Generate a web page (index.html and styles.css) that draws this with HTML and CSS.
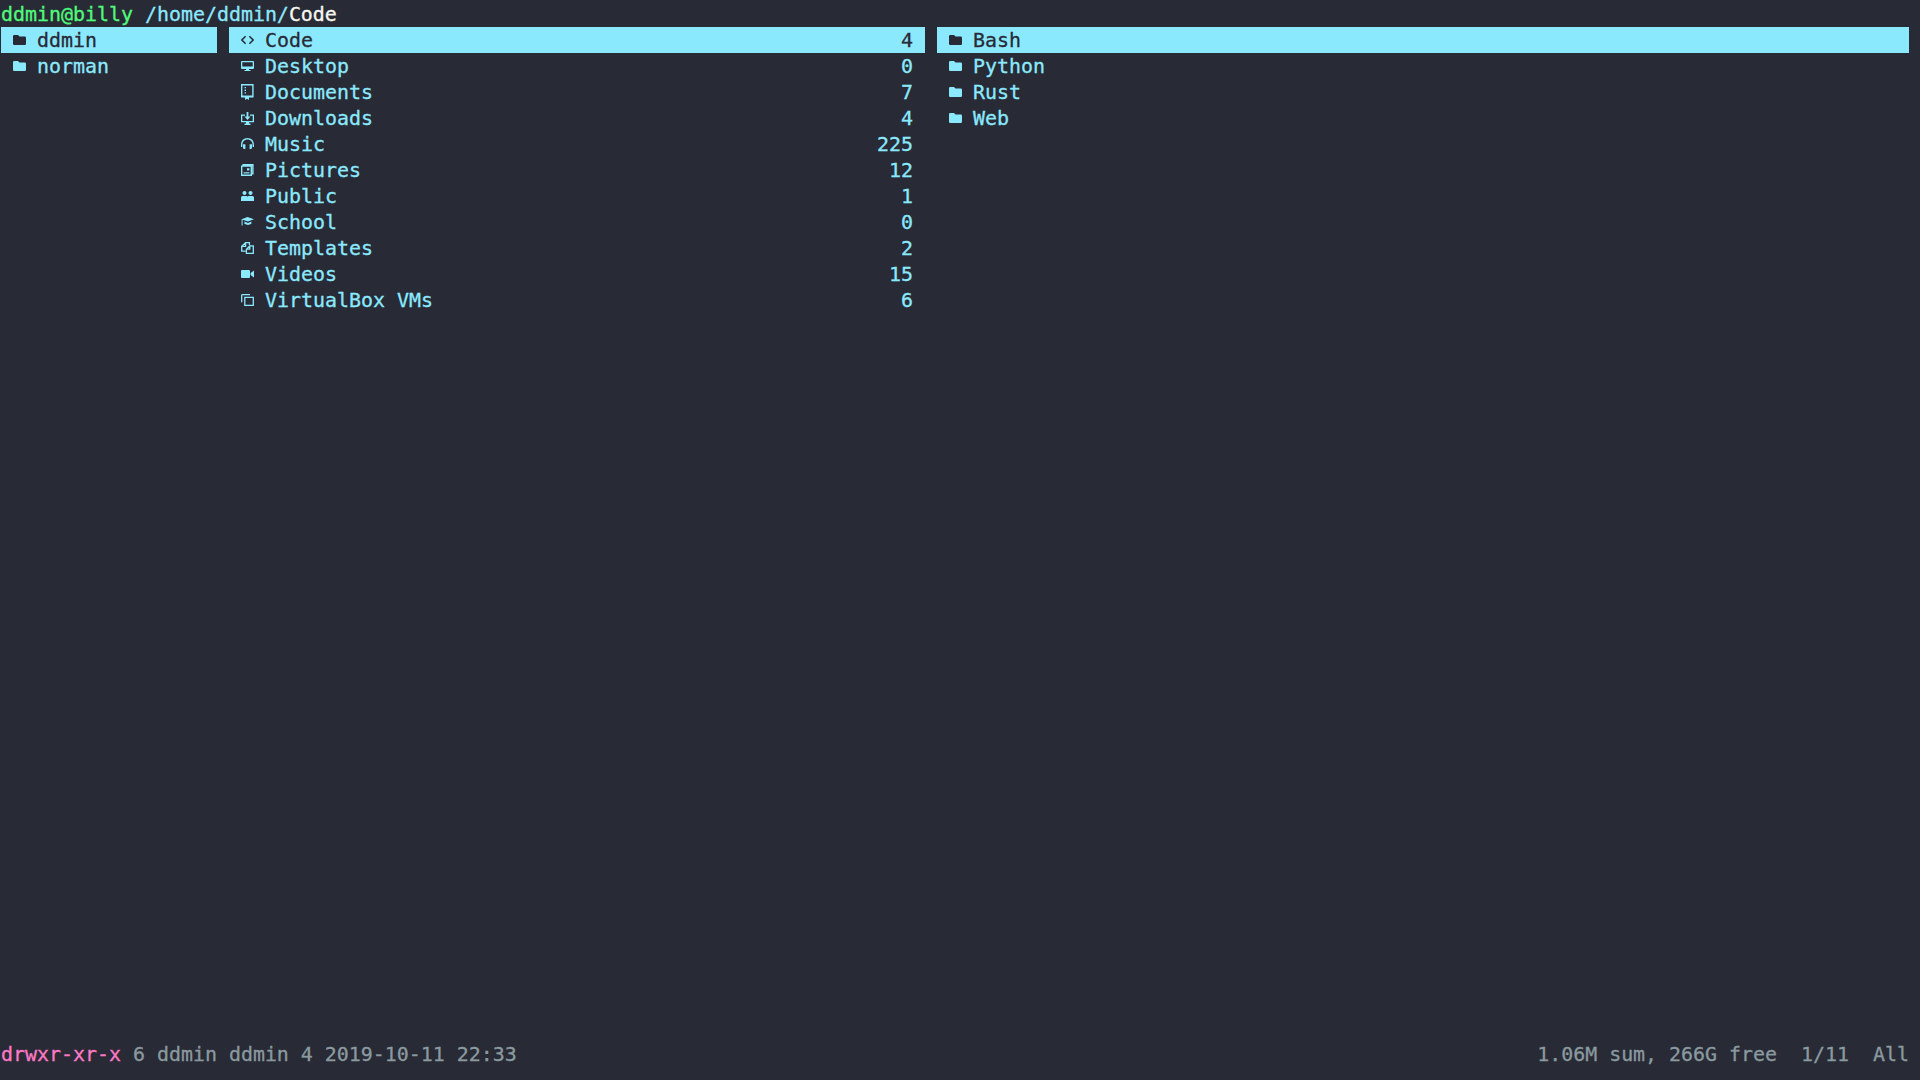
FILE: index.html
```html
<!DOCTYPE html>
<html lang="en">
<head>
<meta charset="utf-8">
<title>ranger</title>
<link rel="stylesheet" href="styles.css">
</head>
<body>
<svg class="defs" width="0" height="0" aria-hidden="true">
  <symbol id="i-folder" viewBox="0 0 13 16"><path fill="currentColor" d="M0 4.2Q0 3 1.2 3H5L6.5 4.6H11.8Q13 4.6 13 5.8V11.8Q13 13 11.8 13H1.2Q0 13 0 11.8Z"/></symbol>
  <symbol id="i-code" viewBox="0 0 13 16"><path fill="none" stroke="currentColor" stroke-width="1.5" d="M4.6 4.2L.9 8L4.6 11.8M8.4 4.2L12.1 8L8.4 11.8"/></symbol>
  <symbol id="i-desktop" viewBox="0 0 13 16"><path fill="currentColor" fill-rule="evenodd" d="M1 3H12Q13 3 13 4V10Q13 11 12 11H8V12H9.5V13H3.5V12H5V11H1Q0 11 0 10V4Q0 3 1 3ZM1.3 4.3V8.6H11.7V4.3Z"/></symbol>
  <symbol id="i-docs" viewBox="0 0 13 16"><path fill="currentColor" fill-rule="evenodd" d="M0 0H12.6V13.6H8V16L6 14.8L4 16V13.6H0ZM1.4 1.4V11.4H11.2V1.4ZM3.6 3H5V4.3H3.6ZM3.6 5.6H5V6.9H3.6ZM3.6 8.2H5V9.5H3.6Z"/></symbol>
  <symbol id="i-down" viewBox="0 0 13 16"><path fill="currentColor" d="M0 4.5H4V5.8H1.3V11H11.7V5.8H9V4.5H13V12.3H8V13.6H9.5V15H3.5V13.6H5V12.3H0ZM5.6 2H7.4V6.5H9.5L6.5 10L3.5 6.5H5.6Z"/></symbol>
  <symbol id="i-music" viewBox="0 0 13 16"><path fill="currentColor" d="M0 8.6C0 4.8 2.8 2 6.5 2S13 4.8 13 8.6V11H11.6V8.6C11.6 5.6 9.4 3.4 6.5 3.4S1.4 5.6 1.4 8.6V11H0ZM2 8.2H4.4V13H3.2Q2 13 2 11.8ZM8.6 8.2H11V11.8Q11 13 9.8 13H8.6Z"/></symbol>
  <symbol id="i-pics" viewBox="0 0 13 16"><path fill="currentColor" fill-rule="evenodd" d="M0 3.4H1.4V2H12.6V12.4H11V14H0ZM2.8 3.4H11V11H11.2V3.4ZM1.4 4.8V12.6H9.6V4.8ZM6 6.2H8.4V8.6H6ZM2.6 10.2H8.4V11.4H2.6Z"/></symbol>
  <symbol id="i-public" viewBox="0 0 13 16"><path fill="currentColor" d="M3.5 3A2 2 0 1 1 3.49 3ZM9.5 3A2 2 0 1 1 9.49 3ZM0 9.5Q0 8 1.5 8H5.5Q6.5 8 6.5 9Q6.5 8 7.5 8H11.5Q13 8 13 9.5V13H0Z"/></symbol>
  <symbol id="i-school" viewBox="0 0 13 16"><path fill="currentColor" d="M6.5 3L13 5.2L7 7.6L1.6 5.8V11.4H.6V5.2ZM3.4 7.6L7 8.9L10.4 7.6V9.8Q7 12 3.4 9.8Z"/></symbol>
  <symbol id="i-templates" viewBox="0 0 13 16"><path fill="none" stroke="currentColor" stroke-width="1.3" d="M8.4 5V2.7H4.6L.7 6.4V11.2H4.6M4.6 2.9V6.4H.9M8.8 5.8H12.3V13.4H5.4V9.2ZM8.8 6V9.2H5.6"/></symbol>
  <symbol id="i-videos" viewBox="0 0 13 16"><path fill="currentColor" d="M1 4H8Q9 4 9 5V11Q9 12 8 12H1Q0 12 0 11V5Q0 4 1 4ZM9.6 7L13 4.6V11.4L9.6 9Z"/></symbol>
  <symbol id="i-vbox" viewBox="0 0 13 16"><path fill="none" stroke="currentColor" stroke-width="1.3" d="M3.8 5.3H12.3V13.4H3.8ZM.7 10.2V3.5Q.7 2.7 1.5 2.7H9"/></symbol>
</svg>

<header class="title"><span class="host">ddmin@billy</span> <span class="path">/home/ddmin/</span><span class="leaf">Code</span></header>

<main class="columns">
  <ul class="col col-parent">
    <li class="row sel"><svg class="icon"><use href="#i-folder"/></svg><span class="name">ddmin</span></li>
    <li class="row"><svg class="icon"><use href="#i-folder"/></svg><span class="name">norman</span></li>
  </ul>
  <ul class="col col-current">
    <li class="row sel"><svg class="icon"><use href="#i-code"/></svg><span class="name">Code</span><span class="count">4</span></li>
    <li class="row"><svg class="icon"><use href="#i-desktop"/></svg><span class="name">Desktop</span><span class="count">0</span></li>
    <li class="row"><svg class="icon"><use href="#i-docs"/></svg><span class="name">Documents</span><span class="count">7</span></li>
    <li class="row"><svg class="icon"><use href="#i-down"/></svg><span class="name">Downloads</span><span class="count">4</span></li>
    <li class="row"><svg class="icon"><use href="#i-music"/></svg><span class="name">Music</span><span class="count">225</span></li>
    <li class="row"><svg class="icon"><use href="#i-pics"/></svg><span class="name">Pictures</span><span class="count">12</span></li>
    <li class="row"><svg class="icon"><use href="#i-public"/></svg><span class="name">Public</span><span class="count">1</span></li>
    <li class="row"><svg class="icon"><use href="#i-school"/></svg><span class="name">School</span><span class="count">0</span></li>
    <li class="row"><svg class="icon"><use href="#i-templates"/></svg><span class="name">Templates</span><span class="count">2</span></li>
    <li class="row"><svg class="icon"><use href="#i-videos"/></svg><span class="name">Videos</span><span class="count">15</span></li>
    <li class="row"><svg class="icon"><use href="#i-vbox"/></svg><span class="name">VirtualBox VMs</span><span class="count">6</span></li>
  </ul>
  <ul class="col col-preview">
    <li class="row sel"><svg class="icon"><use href="#i-folder"/></svg><span class="name">Bash</span></li>
    <li class="row"><svg class="icon"><use href="#i-folder"/></svg><span class="name">Python</span></li>
    <li class="row"><svg class="icon"><use href="#i-folder"/></svg><span class="name">Rust</span></li>
    <li class="row"><svg class="icon"><use href="#i-folder"/></svg><span class="name">Web</span></li>
  </ul>
</main>

<footer class="status">
  <div><span class="perm">drwxr-xr-x</span> 6 ddmin ddmin 4 2019-10-11 22:33</div>
  <div class="summary">1.06M sum, 266G free  1/11  All</div>
</footer>
</body>
</html>
```

FILE: styles.css
```css
* { box-sizing: border-box; }
html, body { margin: 0; height: 100%; }
body {
  display: flex;
  flex-direction: column;
  height: 100vh;
  padding: 0 11px 12px 1px;
  overflow: hidden;
  background: #282a36;
  color: #8be9fd;
  font-family: "DejaVu Sans Mono", "Liberation Mono", monospace;
  font-size: 19.93px;
  line-height: 26px;
  -webkit-text-stroke: 0.3px currentColor;
}
.defs { position: absolute; }
.title { height: 27px; line-height: 29px; color: #8be9fd; }
.host { color: #50fa7b; }
.leaf { color: #f8f8f2; }
.columns { flex: 1; display: flex; gap: 12px; min-height: 0; }
.col { list-style: none; margin: 0; padding: 0; }
.col-parent { width: 216px; }
.col-current { width: 696px; }
.col-preview { flex: 1; }
.row { display: flex; align-items: center; height: 26px; padding: 0 12px; }
.row.sel { background: #8be9fd; color: #282a36; }
.icon { width: 13px; height: 16px; margin-right: 11px; flex: none; }
.name { flex: 1; }
.name, .count { margin-top: 2px; }
.status { display: flex; justify-content: space-between; height: 26px; color: #8a9a9f; }
.summary { white-space: pre; }
.perm { color: #ff79c6; }
```
